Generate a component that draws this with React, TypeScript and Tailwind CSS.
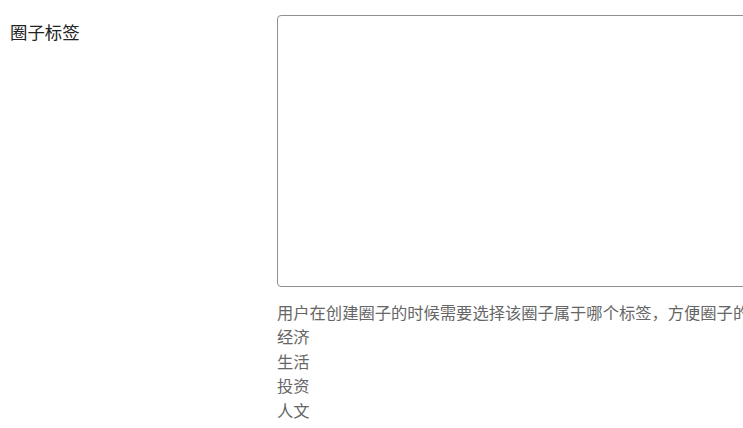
import React from 'react';

const tags = ['经济', '生活', '投资', '人文'];

export default function App() {
    return (
        <div
            className="w-[743px] h-[428px] overflow-hidden bg-white"
            style={{ fontFamily: '"Noto Sans CJK SC", "Noto Sans", sans-serif' }}
        >
            <div className="flex pt-[15px]">
                {/* Label column */}
                <div className="w-[277px] shrink-0 pl-[10px]">
                    <label className="block mt-[4px] text-[17.4px] leading-[26px] text-[#222]">圈子标签</label>
                </div>

                {/* Field column */}
                <div className="shrink-0">
                    <textarea className="block w-[560px] h-[272px] rounded-[4px] border border-[#8f8f8f] resize-none outline-none" />
                    <div className="mt-[12.5px] text-[16.3px] leading-[24.5px] text-[#666] whitespace-nowrap">
                        <p>用户在创建圈子的时候需要选择该圈子属于哪个标签，方便圈子的分类和检索</p>
                        {tags.map(t => (
                            <p key={t}>{t}</p>
                        ))}
                    </div>
                </div>
            </div>
        </div>
    );
}
